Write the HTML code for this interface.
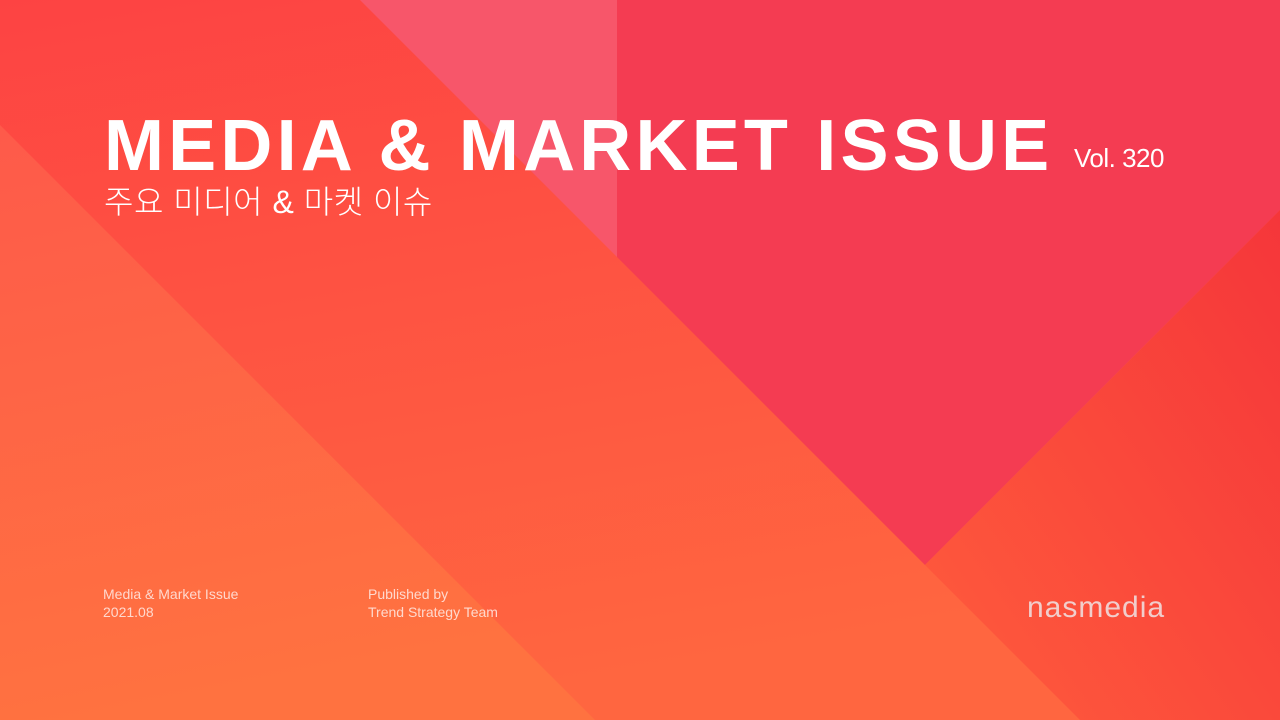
<!DOCTYPE html>
<html><head><meta charset="utf-8"><style>
html,body{margin:0;padding:0;width:1280px;height:720px;overflow:hidden}
body{position:relative;font-family:"Liberation Sans","Noto Sans CJK KR",sans-serif;color:#fff}
svg{position:absolute;left:0;top:0}
.t{position:absolute;white-space:nowrap}
</style></head><body>
<svg width="1280" height="720">
<defs>
<linearGradient id="g1" x1="0" y1="0" x2="0.3" y2="1"><stop offset="0" stop-color="#fd4343"/><stop offset="1" stop-color="#ff6640"/></linearGradient>
<linearGradient id="g3" x1="0" y1="0" x2="0.2" y2="1"><stop offset="0" stop-color="#fe5a4a"/><stop offset="1" stop-color="#ff7240"/></linearGradient>
<linearGradient id="g4" x1="1" y1="0" x2="0" y2="1"><stop offset="0" stop-color="#f5363a"/><stop offset="1" stop-color="#ff5c3c"/></linearGradient>
</defs>
<rect width="1280" height="720" fill="url(#g1)"/>
<polygon points="0,125 595,720 0,720" fill="url(#g3)"/>
<polygon points="360,0 617,0 617,257" fill="#f7566a"/>
<polygon points="617,0 1280,0 1280,210 925,565 617,257" fill="#f43c52"/>
<polygon points="925,565 1280,210 1280,720 1080,720" fill="url(#g4)"/>
</svg>
<div class="t" style="left:104px;top:104px;font-size:72px;font-weight:bold;letter-spacing:4.2px;line-height:84px">MEDIA &amp; MARKET ISSUE</div>
<div class="t" style="left:1074px;top:142px;font-size:26px;line-height:32px;letter-spacing:-0.5px">Vol. 320</div>
<div class="t" style="left:104px;top:182px;font-size:32px;line-height:40px;font-weight:300;letter-spacing:0.5px">주요 미디어 &amp; 마켓 이슈</div>
<div class="t" style="left:103px;top:585px;font-size:14px;line-height:18px;color:rgba(255,235,230,0.85)">Media &amp; Market Issue<br>2021.08</div>
<div class="t" style="left:368px;top:585px;font-size:14px;line-height:18px;color:rgba(255,235,230,0.85)">Published by<br>Trend Strategy Team</div>
<div class="t" style="left:1027px;top:590px;font-size:30px;line-height:36px;letter-spacing:1px;color:rgba(240,220,220,0.9)">nasmedia</div>
</body></html>
